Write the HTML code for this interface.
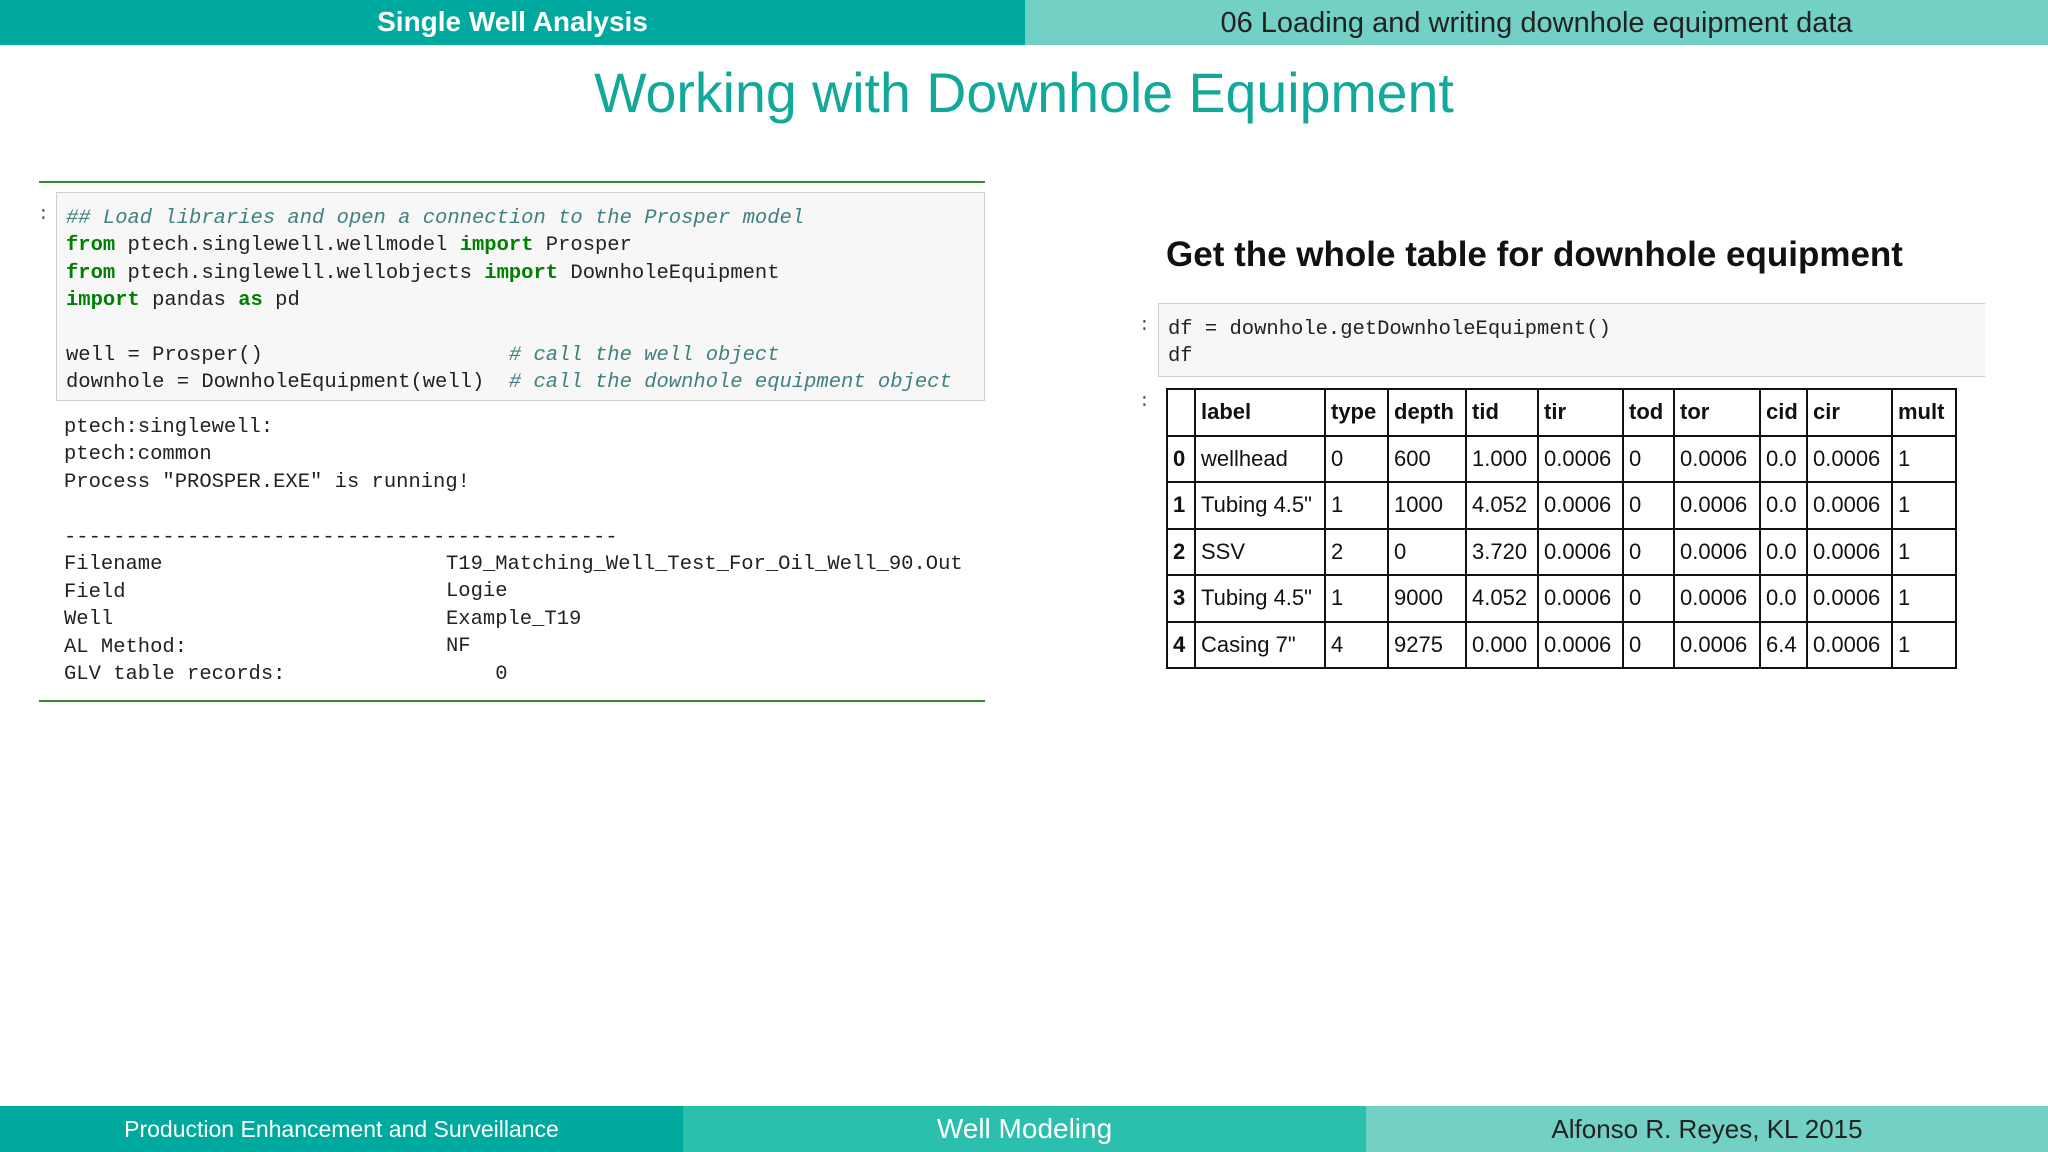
<!DOCTYPE html>
<html><head><meta charset="utf-8"><style>
*{margin:0;padding:0;box-sizing:border-box}
body{width:2048px;height:1152px;position:relative;background:#fff;font-family:"Liberation Sans",sans-serif;overflow:hidden}
.abs{position:absolute}
.mono{font-family:"Liberation Mono",monospace;white-space:pre}
.code{font-size:20.5px;line-height:27.4px;color:#222}
.c{color:#408080;font-style:italic}
.k{color:#008000;font-weight:bold}
table{border-collapse:collapse;table-layout:fixed;font-size:22px;color:#111}
td,th{border:2px solid #111;height:46.5px;padding:0 0 0 5px;text-align:left;white-space:nowrap;overflow:hidden}
th{font-weight:bold}
</style></head><body>
<div class="abs" style="left:0;top:0;width:1025px;height:45px;background:#00a99d"></div>
<div class="abs" style="left:1025px;top:0;width:1023px;height:45px;background:#73d0c4"></div>
<div class="abs" style="left:0;top:0;width:1025px;height:45px;line-height:43px;text-align:center;color:#fff;font-weight:bold;font-size:28px">Single Well Analysis</div>
<div class="abs" style="left:1025px;top:0;width:1023px;height:45px;line-height:47px;text-align:center;color:#222;font-size:29px">06 Loading and writing downhole equipment data</div>
<div class="abs" style="left:0;top:63px;width:2048px;text-align:center;color:#12a89a;font-size:55.5px;line-height:60px">Working with Downhole Equipment</div>

<div class="abs" style="left:39px;top:181px;width:946px;height:2px;background:#2e8b2e"></div>
<div class="abs" style="left:39px;top:700px;width:946px;height:2px;background:#2e8b2e"></div>
<div class="abs mono" style="left:38px;top:205px;font-size:18px;color:#555">:</div>
<div class="abs" style="left:56px;top:192px;width:929px;height:209px;background:#f7f7f7;border:1px solid #cfcfcf"></div>
<div class="abs mono code" style="left:66px;top:205px"><span class="c">## Load libraries and open a connection to the Prosper model</span>
<span class="k">from</span> ptech.singlewell.wellmodel <span class="k">import</span> Prosper
<span class="k">from</span> ptech.singlewell.wellobjects <span class="k">import</span> DownholeEquipment
<span class="k">import</span> pandas <span class="k">as</span> pd

well = Prosper()                    <span class="c"># call the well object</span>
downhole = DownholeEquipment(well)  <span class="c"># call the downhole equipment object</span></div>
<div class="abs mono code" style="left:64px;top:414px">ptech:singlewell:
ptech:common
Process "PROSPER.EXE" is running!

---------------------------------------------
Filename</div>
<div class="abs mono code" style="left:64px;top:579px">Field
Well
AL Method:
GLV table records:</div>
<div class="abs mono code" style="left:446px;top:551px">T19_Matching_Well_Test_For_Oil_Well_90.Out
Logie
Example_T19
NF
    0</div>

<div class="abs" style="left:1166px;top:235px;font-size:35px;font-weight:bold;color:#111">Get the whole table for downhole equipment</div>
<div class="abs mono" style="left:1139px;top:316px;font-size:18px;color:#555">:</div>
<div class="abs mono" style="left:1139px;top:392px;font-size:18px;color:#555">:</div>
<div class="abs" style="left:1158px;top:303px;width:827px;height:74px;background:#f7f7f7;border:1px solid #cfcfcf;border-right:none"></div>
<div class="abs mono code" style="left:1168px;top:316px">df = downhole.getDownholeEquipment()
df</div>
<table class="abs" style="left:1166px;top:388px;width:789px">
<colgroup><col style="width:28px"><col style="width:130px"><col style="width:63px"><col style="width:78px"><col style="width:72px"><col style="width:85px"><col style="width:51px"><col style="width:86px"><col style="width:47px"><col style="width:85px"><col style="width:64px"></colgroup>
<tr><th></th><th>label</th><th>type</th><th>depth</th><th>tid</th><th>tir</th><th>tod</th><th>tor</th><th>cid</th><th>cir</th><th>mult</th></tr>
<tr><th>0</th><td>wellhead</td><td>0</td><td>600</td><td>1.000</td><td>0.0006</td><td>0</td><td>0.0006</td><td>0.0</td><td>0.0006</td><td>1</td></tr>
<tr><th>1</th><td>Tubing 4.5"</td><td>1</td><td>1000</td><td>4.052</td><td>0.0006</td><td>0</td><td>0.0006</td><td>0.0</td><td>0.0006</td><td>1</td></tr>
<tr><th>2</th><td>SSV</td><td>2</td><td>0</td><td>3.720</td><td>0.0006</td><td>0</td><td>0.0006</td><td>0.0</td><td>0.0006</td><td>1</td></tr>
<tr><th>3</th><td>Tubing 4.5"</td><td>1</td><td>9000</td><td>4.052</td><td>0.0006</td><td>0</td><td>0.0006</td><td>0.0</td><td>0.0006</td><td>1</td></tr>
<tr><th>4</th><td>Casing 7"</td><td>4</td><td>9275</td><td>0.000</td><td>0.0006</td><td>0</td><td>0.0006</td><td>6.4</td><td>0.0006</td><td>1</td></tr>
</table>

<div class="abs" style="left:0;top:1106px;width:683px;height:46px;background:#00a99d;color:#fff;font-size:23px;line-height:46px;text-align:center">Production Enhancement and Surveillance</div>
<div class="abs" style="left:683px;top:1106px;width:683px;height:46px;background:#2bbfad;color:#fff;font-size:28px;line-height:46px;text-align:center">Well Modeling</div>
<div class="abs" style="left:1366px;top:1106px;width:682px;height:46px;background:#73d0c4;color:#222;font-size:26px;line-height:46px;text-align:center">Alfonso R. Reyes, KL 2015</div>
</body></html>
